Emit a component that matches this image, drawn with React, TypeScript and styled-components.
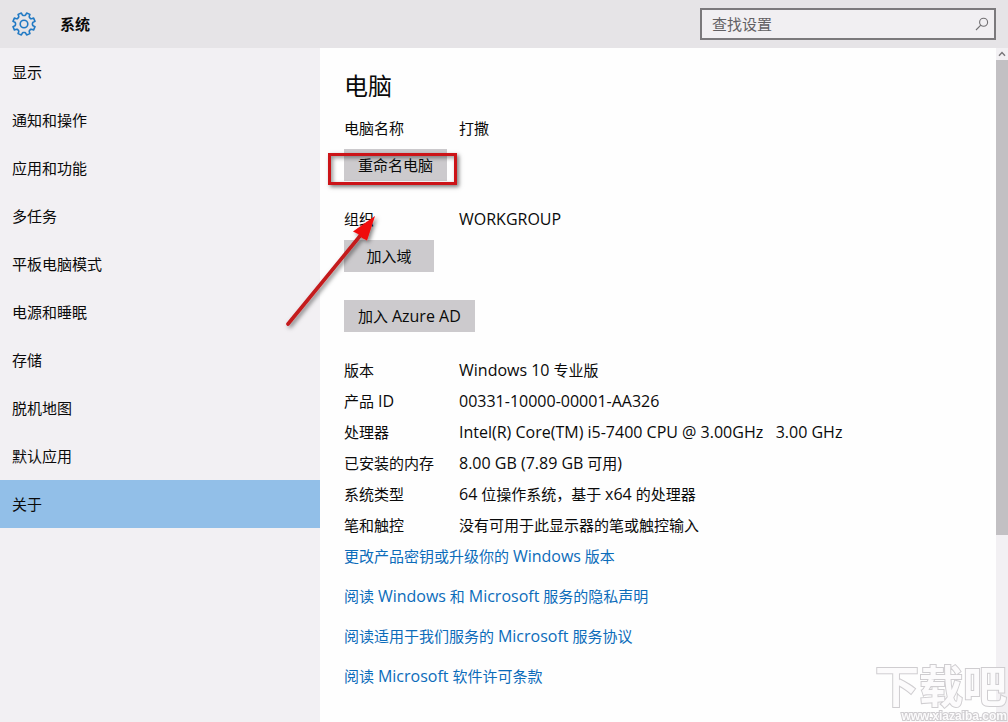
import React from "react";
import styled, { createGlobalStyle, css } from "styled-components";

const GlobalStyle = createGlobalStyle`
  *, *::before, *::after { box-sizing: border-box; }
  body {
    margin: 0;
    background: #fefefe;
    color: #0a0a0a;
    font-family: "Open Sans", "Noto Sans CJK SC", sans-serif;
    font-size: 15px;
    line-height: 20px;
  }
`;

const Page = styled.div`
  display: flex;
  flex-direction: column;
  min-height: 100vh;
`;

const Header = styled.header`
  display: flex;
  align-items: center;
  height: 48px;
  padding: 0 12px;
  background: #e6e4e7;
`;

const AppTitle = styled.h1`
  flex: 1;
  margin: 0 0 0 24px;
  font-size: 15px;
  line-height: 20px;
  font-weight: 700;
`;

const SearchBox = styled.label`
  display: flex;
  align-items: center;
  width: 296px;
  height: 32px;
  padding: 0 5px 0 10px;
  border: 2px solid #7b797c;
  background: #f1eff2;
`;

const SearchInput = styled.input`
  flex: 1;
  min-width: 0;
  padding: 0;
  border: 0;
  outline: 0;
  background: transparent;
  font: inherit;
  &::placeholder { color: #626063; opacity: 1; }
`;

const Body = styled.div`
  display: flex;
  flex: 1;
`;

const Sidebar = styled.nav`
  flex: 0 0 320px;
  background: #f2f0f3;
`;

const NavLink = styled.a<{ $active?: boolean }>`
  display: flex;
  align-items: center;
  height: 48px;
  padding: 0 12px;
  color: inherit;
  text-decoration: none;
  ${(p) => p.$active && css`background: #92bfe8;`}
`;

const Main = styled.main`
  flex: 1;
  min-width: 0;
  padding: 20px 24px;
`;

const SectionTitle = styled.h2`
  margin: 0 0 14px;
  font-size: 24px;
  line-height: 36px;
  font-weight: 400;
`;

const Groups = styled.div`
  display: flex;
  flex-direction: column;
  align-items: flex-start;
  gap: 28px;
`;

const Group = styled.div`
  display: flex;
  flex-direction: column;
  align-items: flex-start;
  gap: 11px;
`;

const Field = styled.div`
  display: grid;
  grid-template-columns: 115px auto;
  line-height: 20px;
`;

const Button = styled.button`
  min-width: 90px;
  height: 32px;
  padding: 0 14px;
  border: 0;
  background: #cccacd;
  color: inherit;
  font: inherit;
  white-space: nowrap;
`;

const Marked = styled.div`
  position: relative;
`;

const MarkFrame = styled.div`
  position: absolute;
  inset: 4px -10px -4px -16px;
  border: 3px solid #cc1418;
  box-shadow: 2px 2px 4px rgba(0, 0, 0, 0.5), inset 2px 2px 4px rgba(0, 0, 0, 0.4);
  pointer-events: none;
`;

const MarkArrow = styled.svg`
  position: absolute;
  top: 60px;
  left: -64px;
  pointer-events: none;
`;

const Specs = styled.table`
  margin-top: 22px;
  border-collapse: collapse;
  th, td {
    padding: 0;
    height: 31px;
    line-height: 20px;
    text-align: left;
    font-weight: 400;
    white-space: pre;
  }
  th { width: 115px; }
`;

const Links = styled.div`
  display: flex;
  flex-direction: column;
  align-items: flex-start;
  gap: 20px;
  padding-top: 6px;
`;

const TextLink = styled.a`
  color: #0c6cba;
  line-height: 20px;
  text-decoration: none;
`;

const LatinRun = styled.span`
  font-size: 16px;
`;

const ScrollBar = styled.div`
  display: flex;
  flex-direction: column;
  flex: 0 0 12px;
  background: #f2f0f3;
`;

const ScrollStep = styled.div`
  display: flex;
  align-items: center;
  justify-content: center;
  height: 12px;
`;

const ScrollThumb = styled.div`
  flex: 73;
  background: #c2c0c3;
`;

const ScrollRest = styled.div`
  flex: 27;
`;

const Watermark = styled.div`
  position: fixed;
  right: 1px;
  bottom: 0;
  display: flex;
  flex-direction: column;
  align-items: flex-end;
  color: #fcfbfc;
  font-weight: 700;
  pointer-events: none;
  paint-order: stroke fill;
  -webkit-text-stroke: 2px #cfcdd0;
`;

const WatermarkName = styled.span`
  font-size: 44px;
  line-height: 48px;
`;

const WatermarkSite = styled.span`
  font-family: "Liberation Sans", sans-serif;
  font-size: 12px;
  line-height: 12px;
`;

/* Sets Latin words one size up so they sit evenly beside the Chinese text. */
function Mixed({ text }: { text: string }) {
  return (
    <>
      {text.split(/([\x21-\x7e]+(?: +[\x21-\x7e]+)*)/).map((part, i) =>
        i % 2 ? <LatinRun key={i}>{part}</LatinRun> : part
      )}
    </>
  );
}

function gearPath(): string {
  const points: string[] = [];
  for (let i = 0; i < 8; i++) {
    const mid = i * 45 + 22.5;
    [[-17, 8.5], [-12, 9.2], [-9, 11.3], [9, 11.3], [12, 9.2], [17, 8.5]].forEach(([offset, r]) => {
      const a = ((mid + offset) * Math.PI) / 180;
      points.push(`${(12 + r * Math.sin(a)).toFixed(2)} ${(12 - r * Math.cos(a)).toFixed(2)}`);
    });
  }
  return `M${points.join("L")}Z`;
}

const GearIcon = () => (
  <svg width="24" height="24" viewBox="0 0 24 24" fill="none" stroke="#2079c4" strokeWidth="1.6" strokeLinejoin="round" aria-hidden="true">
    <path d={gearPath()} />
    <circle cx="12" cy="12" r="3.8" />
  </svg>
);

const SearchIcon = () => (
  <svg width="14" height="14" viewBox="0 0 14 14" fill="none" stroke="#716f72" strokeWidth="1.1" aria-hidden="true">
    <circle cx="8.6" cy="5.2" r="4" />
    <path d="M5.8 8.1L1 13" />
  </svg>
);

const Chevron = ({ down }: { down?: boolean }) => (
  <svg width="8" height="6" viewBox="0 0 8 6" fill="none" stroke="#777578" strokeWidth="1.4" aria-hidden="true">
    <path d={down ? "M1 1.2L4 4.4L7 1.2" : "M1 4.8L4 1.6L7 4.8"} />
  </svg>
);

const navItems = ["显示", "通知和操作", "应用和功能", "多任务", "平板电脑模式", "电源和睡眠", "存储", "脱机地图", "默认应用", "关于"];

const specs = [
  ["版本", "Windows 10 专业版"],
  ["产品 ID", "00331-10000-00001-AA326"],
  ["处理器", "Intel(R) Core(TM) i5-7400 CPU @ 3.00GHz   3.00 GHz"],
  ["已安装的内存", "8.00 GB (7.89 GB 可用)"],
  ["系统类型", "64 位操作系统，基于 x64 的处理器"],
  ["笔和触控", "没有可用于此显示器的笔或触控输入"],
];

const links = [
  "更改产品密钥或升级你的 Windows 版本",
  "阅读 Windows 和 Microsoft 服务的隐私声明",
  "阅读适用于我们服务的 Microsoft 服务协议",
  "阅读 Microsoft 软件许可条款",
];

export default function App() {
  return (
    <Page lang="zh-CN">
      <GlobalStyle />
      <Header>
        <GearIcon />
        <AppTitle>系统</AppTitle>
        <SearchBox>
          <SearchInput type="text" placeholder="查找设置" aria-label="查找设置" />
          <SearchIcon />
        </SearchBox>
      </Header>
      <Body>
        <Sidebar>
          {navItems.map((item) => (
            <NavLink key={item} href="#" $active={item === "关于"}>{item}</NavLink>
          ))}
        </Sidebar>
        <Main>
          <SectionTitle>电脑</SectionTitle>
          <Groups>
            <Group>
              <Field><span>电脑名称</span><span>打撒</span></Field>
              <Marked>
                <Button type="button">重命名电脑</Button>
                <MarkFrame />
                <MarkArrow width="104" height="124" viewBox="0 0 104 124" aria-hidden="true">
                  <defs>
                    <filter id="arrow-shadow" x="-20%" y="-20%" width="140%" height="140%">
                      <feDropShadow dx="2" dy="2" stdDeviation="2" floodColor="#000" floodOpacity="0.5" />
                    </filter>
                  </defs>
                  <g filter="url(#arrow-shadow)">
                    <path d="M8 115L80 27" stroke="#c41a1e" strokeWidth="3.6" strokeLinecap="round" />
                    <path d="M95 7L73 22.5L78 25L82 29L87 31.5Z" fill="#f00a0a" />
                  </g>
                </MarkArrow>
              </Marked>
            </Group>
            <Group>
              <Field><span>组织</span><span><Mixed text="WORKGROUP" /></span></Field>
              <Button type="button">加入域</Button>
            </Group>
            <Button type="button"><Mixed text="加入 Azure AD" /></Button>
          </Groups>
          <Specs>
            <tbody>
              {specs.map(([name, value]) => (
                <tr key={name}>
                  <th scope="row"><Mixed text={name} /></th>
                  <td><Mixed text={value} /></td>
                </tr>
              ))}
            </tbody>
          </Specs>
          <Links>
            {links.map((text) => (
              <TextLink key={text} href="#"><Mixed text={text} /></TextLink>
            ))}
          </Links>
        </Main>
        <ScrollBar>
          <ScrollStep><Chevron /></ScrollStep>
          <ScrollThumb />
          <ScrollRest />
          <ScrollStep><Chevron down /></ScrollStep>
        </ScrollBar>
      </Body>
      <Watermark>
        <WatermarkName>下载吧</WatermarkName>
        <WatermarkSite>www.xiazaiba.com</WatermarkSite>
      </Watermark>
    </Page>
  );
}
